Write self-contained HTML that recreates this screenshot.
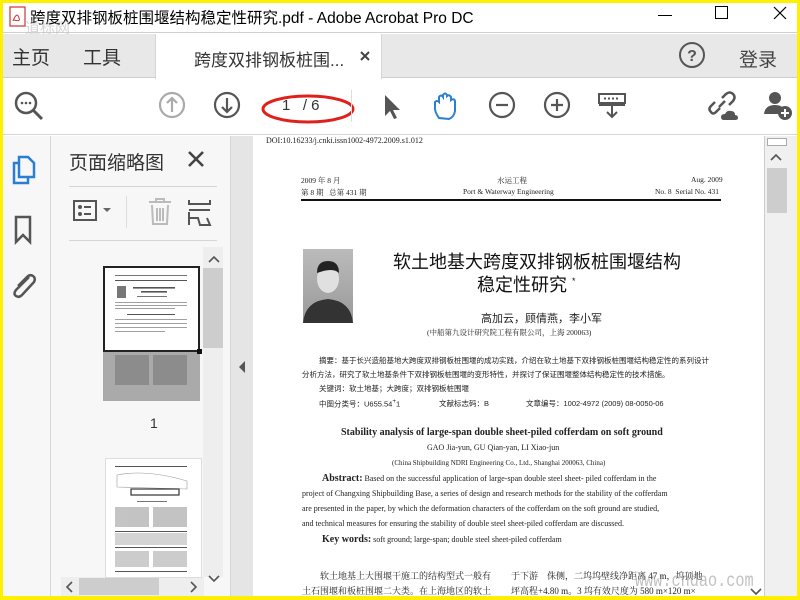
<!DOCTYPE html>
<html><head><meta charset="utf-8"><style>
*{margin:0;padding:0;box-sizing:border-box}
body{width:800px;height:600px;overflow:hidden;background:#ffef00;font-family:"Liberation Sans","Noto Sans CJK SC",sans-serif;position:relative}
.a{position:absolute}
.cj{font-family:"Liberation Serif","Noto Serif CJK SC","Noto Sans CJK SC",serif}
.sf{font-family:"Liberation Serif",serif}
.t{color:#222;white-space:nowrap}
</style></head><body>
<div class="a" style="left:3px;top:3px;width:794px;height:593px;background:#fff;overflow:hidden">
<div class="a" style="left:0;top:0;width:794px;height:30px;background:#fff;border-bottom:1px solid #d0d0d0"></div>
<svg class="a" style="left:4px;top:3px" width="22" height="22"><rect x="3" y="1" width="15" height="19" fill="#fff" stroke="#c33" stroke-width="1.2"/><path d="M6 15 Q10 5 12 12 Q14 16 7 14" stroke="#c33" fill="none"/></svg>
<div class="a t" style="left:27px;top:3px;font-size:15.5px;color:#000">跨度双排钢板桩围堰结构稳定性研究.pdf - Adobe Acrobat Pro DC</div>
<div class="a" style="left:22px;top:14px;font-size:15px;color:#bbb;opacity:.6">道标网</div>
<div class="a" style="left:655px;top:12px;width:14px;height:1px;background:#000"></div>
<div class="a" style="left:712px;top:3px;width:13px;height:13px;border:1px solid #000"></div>
<svg class="a" style="left:770px;top:3px" width="14" height="14"><path d="M1 1L13 13M13 1L1 13" stroke="#000" stroke-width="1.2"/></svg>
<div class="a" style="left:0;top:31px;width:794px;height:44px;background:#e8e8e8;border-bottom:1px solid #cfcfcf"></div>
<div class="a" style="left:152px;top:31px;width:227px;height:45px;background:#fff;border-left:1px solid #d5d5d5;border-right:1px solid #d5d5d5"></div>
<div class="a t" style="left:9px;top:40px;font-size:19px;color:#333">主页</div>
<div class="a t" style="left:80px;top:40px;font-size:19px;color:#333">工具</div>
<div class="a t" style="left:191px;top:43px;font-size:17px;color:#333">跨度双排钢板桩围...</div>
<svg class="a" style="left:357px;top:48px" width="10" height="10"><path d="M1 1L9 9M9 1L1 9" stroke="#444" stroke-width="2"/></svg>
<svg class="a" style="left:675px;top:38px" width="28" height="28"><circle cx="14" cy="14" r="12" fill="none" stroke="#555" stroke-width="2"/><text x="14" y="20" font-size="16" text-anchor="middle" fill="#555" font-family="Liberation Sans" font-weight="bold">?</text></svg>
<div class="a t" style="left:736px;top:42px;font-size:19px;color:#444">登录</div>
<div class="a" style="left:0;top:76px;width:794px;height:56px;background:#fff;border-bottom:1px solid #d5d5d5"></div>
<svg class="a" style="left:10px;top:87px" width="34" height="34"><circle cx="13" cy="13" r="10" fill="none" stroke="#555" stroke-width="2.5"/><path d="M20 20L29 29" stroke="#555" stroke-width="3"/><circle cx="9" cy="13" r="1.3" fill="#555"/><circle cx="13" cy="13" r="1.3" fill="#555"/><circle cx="17" cy="13" r="1.3" fill="#555"/></svg>
<svg class="a" style="left:155px;top:88px" width="28" height="28"><circle cx="14" cy="14" r="12" fill="none" stroke="#aaa" stroke-width="2.2"/><path d="M14 21V8M9 12L14 7L19 12" stroke="#aaa" stroke-width="2.2" fill="none"/></svg>
<svg class="a" style="left:210px;top:88px" width="28" height="28"><circle cx="14" cy="14" r="12" fill="none" stroke="#555" stroke-width="2.2"/><path d="M14 7V20M9 16L14 21L19 16" stroke="#555" stroke-width="2.2" fill="none"/></svg>
<div class="a t" style="left:279px;top:94px;font-size:15px;color:#333">1&nbsp;&nbsp;&nbsp;/ 6</div>
<svg class="a" style="left:255px;top:85px" width="100" height="40"><ellipse cx="50" cy="21" rx="45" ry="13" fill="none" stroke="#e0201a" stroke-width="3"/></svg>
<div class="a" style="left:348px;top:87px;width:1px;height:32px;background:#ddd"></div>
<svg class="a" style="left:378px;top:90px" width="22" height="28"><path d="M4 2L4 23L9 18L13 26L16 25L12 17L19 17Z" fill="#555"/></svg>
<svg class="a" style="left:428px;top:88px" width="30" height="30"><path d="M8 27Q3 20 4 15L4 11Q6 9 8 11L8 6Q10 3 12 6L12 4Q14 1 16 4L16 5Q18 3 20 6L20 9Q23 7 24 10L24 20Q23 26 18 28Z" fill="none" stroke="#2a7ed3" stroke-width="2"/></svg>
<svg class="a" style="left:485px;top:88px" width="28" height="28"><circle cx="14" cy="14" r="12" fill="none" stroke="#555" stroke-width="2.2"/><path d="M8 14H20" stroke="#555" stroke-width="2.2"/></svg>
<svg class="a" style="left:540px;top:88px" width="28" height="28"><circle cx="14" cy="14" r="12" fill="none" stroke="#555" stroke-width="2.2"/><path d="M8 14H20M14 8V20" stroke="#555" stroke-width="2.2"/></svg>
<svg class="a" style="left:594px;top:89px" width="30" height="28"><rect x="2" y="2" width="26" height="9" fill="none" stroke="#555" stroke-width="2"/><path d="M7 6.5H9M11 6.5H13M15 6.5H17M19 6.5H21M2 13H28" stroke="#555" stroke-width="2"/><path d="M15 14V25M10 20L15 25L20 20" stroke="#555" stroke-width="2" fill="none"/></svg>
<svg class="a" style="left:705px;top:87px" width="32" height="32"><path d="M14 8L18 4Q22 1 25 4Q28 7 25 11L21 15M12 18L8 22Q5 25 3 22Q0 19 3 16L7 12M11 17L17 11" stroke="#555" stroke-width="2.5" fill="none"/><path d="M16 30Q13 30 13 27Q13 24 17 24Q19 20 23 21Q27 21 27 25Q30 25 30 28Q30 30 27 30Z" fill="#555"/></svg>
<svg class="a" style="left:760px;top:87px" width="32" height="32"><circle cx="12" cy="8" r="6" fill="#555"/><path d="M1 24Q2 15 12 15Q18 15 20 18L18 24Z" fill="#555"/><circle cx="22" cy="23" r="7" fill="#555"/><path d="M22 19V27M18 23H26" stroke="#fff" stroke-width="2"/></svg>
<div class="a" style="left:0;top:133px;width:48px;height:460px;background:#f7f7f7;border-right:1px solid #d8d8d8"></div>
<svg class="a" style="left:8px;top:150px" width="28" height="34"><path d="M8 4H17L23 10V24H8Z" fill="none" stroke="#2a7ed3" stroke-width="2.5"/><path d="M8 10H3V30H17V24" fill="none" stroke="#2a7ed3" stroke-width="2.5"/></svg>
<svg class="a" style="left:10px;top:212px" width="22" height="30"><path d="M3 2H17V27L10 20L3 27Z" fill="none" stroke="#555" stroke-width="2.5"/></svg>
<svg class="a" style="left:6px;top:268px" width="30" height="30"><path d="M20 6L7 19Q4 23 7 25Q10 27 13 24L25 11Q27 7 24 5Q21 3 18 6L9 15" fill="none" stroke="#555" stroke-width="2.5"/></svg>
<div class="a" style="left:48px;top:133px;width:179px;height:460px;background:#f7f7f7"></div>
<div class="a t" style="left:66px;top:145px;font-size:19px;color:#333">页面缩略图</div>
<svg class="a" style="left:184px;top:147px" width="18" height="18"><path d="M2 2L16 16M16 2L2 16" stroke="#444" stroke-width="2.6"/></svg>
<div class="a" style="left:66px;top:183px;width:148px;height:1px;background:#d5d5d5"></div>
<svg class="a" style="left:69px;top:196px" width="28" height="24"><rect x="2" y="2" width="22" height="19" fill="none" stroke="#555" stroke-width="2"/><circle cx="8" cy="8" r="2" fill="#555"/><circle cx="8" cy="15" r="2" fill="#555"/><path d="M12 8H19M12 15H19" stroke="#555" stroke-width="2"/></svg>
<svg class="a" style="left:100px;top:205px" width="10" height="6"><path d="M0 0H8L4 4Z" fill="#666"/></svg>
<div class="a" style="left:123px;top:193px;width:1px;height:32px;background:#ddd"></div>
<svg class="a" style="left:143px;top:194px" width="28" height="30"><path d="M3 5H25M10 5V2H18V5M6 8L7 27H21L22 8M11 11V24M14 11V24M17 11V24" stroke="#bbb" stroke-width="2" fill="none"/></svg>
<svg class="a" style="left:184px;top:195px" width="26" height="30"><path d="M2 2V6H23V2M2 12H23M2 14V27M2 20H11L13 27H23L20 20" stroke="#555" stroke-width="2" fill="none"/></svg>
<div class="a" style="left:66px;top:237px;width:148px;height:1px;background:#d5d5d5"></div>
<div class="a" style="left:200px;top:244px;width:20px;height:330px;background:#eee"></div>
<svg class="a" style="left:205px;top:252px" width="12" height="8"><path d="M1 7L6 2L11 7" stroke="#555" stroke-width="1.6" fill="none"/></svg>
<div class="a" style="left:200px;top:265px;width:20px;height:80px;background:#cdcdcd"></div>
<svg class="a" style="left:205px;top:572px" width="12" height="8"><path d="M1 1L6 6L11 1" stroke="#555" stroke-width="1.6" fill="none"/></svg>
<div class="a" style="left:58px;top:574px;width:143px;height:19px;background:#eee"></div>
<div class="a" style="left:76px;top:575px;width:80px;height:17px;background:#cdcdcd"></div>
<svg class="a" style="left:62px;top:577px" width="10" height="14"><path d="M7 2L2 7L7 12" stroke="#555" stroke-width="1.6" fill="none"/></svg>
<svg class="a" style="left:186px;top:577px" width="10" height="14"><path d="M2 2L7 7L2 12" stroke="#555" stroke-width="1.6" fill="none"/></svg>
<div class="a" style="left:100px;top:263px;width:97px;height:135px;background:#aaa"></div>
<div class="a" style="left:100px;top:263px;width:97px;height:86px;background:#fff;border:2px solid #222"></div>
<div class="a" style="left:194px;top:346px;width:5px;height:5px;background:#111"></div>
<svg class="a" style="left:104px;top:268px" width="88" height="128" viewBox="0 0 88 128"><g fill="#555"><rect x="8" y="4" width="72" height=".8"/><rect x="8" y="9" width="72" height="1"/><rect x="10" y="15" width="9" height="12" fill="#777"/><rect x="26" y="16" width="42" height="1.6"/><rect x="34" y="20" width="26" height="1.6"/><rect x="30" y="25" width="30" height=".8"/><rect x="8" y="31" width="72" height=".8" opacity=".7"/><rect x="8" y="34" width="72" height=".8" opacity=".7"/><rect x="8" y="37" width="60" height=".8" opacity=".7"/><rect x="20" y="43" width="48" height="1"/><rect x="8" y="48" width="72" height=".8" opacity=".7"/><rect x="8" y="52" width="72" height=".8" opacity=".7"/><rect x="8" y="56" width="72" height=".8" opacity=".7"/><rect x="8" y="60" width="50" height=".8" opacity=".7"/><rect x="8" y="84" width="34" height="30" opacity=".35"/><rect x="46" y="84" width="34" height="30" opacity=".35"/></g></svg>
<div class="a t" style="left:147px;top:412px;font-size:14px;color:#333">1</div>
<div class="a" style="left:102px;top:455px;width:97px;height:120px;background:#fff;border:1px solid #ddd"></div>
<svg class="a" style="left:104px;top:460px" width="90" height="115"><g fill="#555"><rect x="8" y="3" width="72" height="1"/><path d="M10 12Q40 6 80 18L80 26L10 24Z" fill="none" stroke="#999" stroke-width=".6"/><rect x="24" y="26" width="48" height="6" fill="none" stroke="#333" stroke-width="1.2"/><rect x="30" y="38" width="30" height=".8"/><g opacity=".35"><rect x="8" y="44" width="34" height="20"/><rect x="46" y="44" width="34" height="20"/></g><rect x="8" y="68" width="72" height="1"/><rect x="8" y="70" width="72" height="12" opacity=".25"/><rect x="8" y="84" width="72" height="1"/><rect x="8" y="88" width="34" height="16" opacity=".3"/><rect x="46" y="88" width="34" height="16" opacity=".3"/><rect x="8" y="108" width="72" height="1"/></g></svg>
<div class="a" style="left:227px;top:133px;width:23px;height:460px;background:#e5e5e5;border-left:1px solid #d5d5d5"></div>
<svg class="a" style="left:235px;top:357px" width="8" height="14"><path d="M7 1L1 7L7 13Z" fill="#555"/></svg>
<div class="a" style="left:250px;top:133px;width:512px;height:460px;background:#fff;border-right:1px solid #ccc"></div>
<div class="a" style="left:762px;top:133px;width:32px;height:460px;background:#f0f0f0"></div>
<div class="a" style="left:764px;top:135px;width:20px;height:8px;background:#fff;border:1px solid #aaa"></div>
<svg class="a" style="left:767px;top:150px" width="12" height="8"><path d="M1 7L6 2L11 7" stroke="#555" stroke-width="1.6" fill="none"/></svg>
<div class="a" style="left:764px;top:165px;width:20px;height:45px;background:#cdcdcd"></div>
<svg class="a" style="left:747px;top:585px" width="12" height="8"><path d="M1 1L6 6L11 1" stroke="#555" stroke-width="1.6" fill="none"/></svg>

<div class="a t sf" style="left:263px;top:133px;font-size:8px">DOI:10.16233/j.cnki.issn1002-4972.2009.s1.012</div>
<div class="a t cj" style="left:298px;top:172px;font-size:7.5px">2009 年 8 月</div>
<div class="a t cj" style="left:298px;top:184px;font-size:7.5px">第 8 期&nbsp;&nbsp;&nbsp;总第 431 期</div>
<div class="a t cj" style="left:494px;top:172px;font-size:7.5px">水运工程</div>
<div class="a t sf" style="left:460px;top:184px;font-size:7.5px">Port &amp; Waterway Engineering</div>
<div class="a t sf" style="left:688px;top:172px;font-size:7.5px">Aug. 2009</div>
<div class="a t sf" style="left:652px;top:184px;font-size:7.5px">No. 8&nbsp;&nbsp;Serial No. 431</div>
<div class="a" style="left:298px;top:196px;width:420px;height:2px;background:#111"></div>
<div class="a" style="left:300px;top:246px;width:50px;height:74px;background:linear-gradient(#bbb,#999)"></div>
<svg class="a" style="left:300px;top:246px" width="50" height="74"><ellipse cx="25" cy="30" rx="11" ry="14" fill="#e0e0e0"/><path d="M14 24Q14 12 25 12Q36 12 36 24Q30 18 14 24" fill="#222"/><path d="M0 74Q2 52 25 50Q48 52 50 74Z" fill="#333"/></svg>
<div class="a t" style="left:390px;top:245px;font-size:18px;color:#111">软土地基大跨度双排钢板桩围堰结构</div>
<div class="a t" style="left:474px;top:268px;font-size:18px;color:#111">稳定性研究 <sup style="font-size:9px">*</sup></div>
<div class="a t" style="left:478px;top:307px;font-size:11px">高加云，顾倩燕，李小军</div>
<div class="a t cj" style="left:424px;top:324px;font-size:7.5px">(中船第九设计研究院工程有限公司，上海 200063)</div>
<div class="a t" style="left:316px;top:352px;font-size:7.5px">摘要：基于长兴造船基地大跨度双排钢板桩围堰的成功实践，介绍在软土地基下双排钢板桩围堰结构稳定性的系列设计</div>
<div class="a t" style="left:299px;top:366px;font-size:7.5px">分析方法，研究了软土地基条件下双排钢板桩围堰的变形特性，并探讨了保证围堰整体结构稳定性的技术措施。</div>
<div class="a t" style="left:316px;top:380px;font-size:7.5px">关键词：软土地基；大跨度；双排钢板桩围堰</div>
<div class="a t" style="left:316px;top:395px;font-size:7.5px">中图分类号：U655.54<sup>+</sup>1</div>
<div class="a t" style="left:436px;top:395px;font-size:7.5px">文献标志码：B</div>
<div class="a t" style="left:523px;top:395px;font-size:7.5px">文章编号：1002-4972 (2009) 08-0050-06</div>
<div class="a t sf" style="left:338px;top:424px;font-size:10px;font-weight:bold">Stability analysis of large-span double sheet-piled cofferdam on soft ground</div>
<div class="a t sf" style="left:424px;top:440px;font-size:8px">GAO Jia-yun, GU Qian-yan, LI Xiao-jun</div>
<div class="a t sf" style="left:389px;top:456px;font-size:7px">(China Shipbuilding NDRI Engineering Co., Ltd., Shanghai 200063, China)</div>
<div class="a t sf" style="left:319px;top:470px;font-size:8px"><b style="font-size:10px">Abstract:</b> Based on the successful application of large-span double steel sheet- piled cofferdam in the</div>
<div class="a t sf" style="left:299px;top:486px;font-size:8px">project of Changxing Shipbuilding Base, a series of design and research methods for the stability of the cofferdam</div>
<div class="a t sf" style="left:299px;top:501px;font-size:8px">are presented in the paper, by which the deformation characters of the cofferdam on the soft ground are studied,</div>
<div class="a t sf" style="left:299px;top:516px;font-size:8px">and technical measures for ensuring the stability of double steel sheet-piled cofferdam are discussed.</div>
<div class="a t sf" style="left:319px;top:531px;font-size:8px"><b style="font-size:10px">Key words:</b> soft ground; large-span; double steel sheet-piled cofferdam</div>
<div class="a t cj" style="left:317px;top:566px;font-size:9px">软土地基上大围堰干施工的结构型式一般有</div>
<div class="a t cj" style="left:299px;top:581px;font-size:9px">土石围堰和板桩围堰二大类。在上海地区的软土</div>
<div class="a t cj" style="left:508px;top:566px;font-size:9px">于下游　侏侧，二坞坞壁线净距离 47 m，坞顶地</div>
<div class="a t cj" style="left:508px;top:581px;font-size:9px">坪高程+4.80 m。3 坞有效尺度为 580 m×120 m×</div>
<div class="a t" style="left:632px;top:567px;font-size:19px;color:#999;opacity:.6;font-family:'Liberation Mono',monospace;transform:scaleX(.8);transform-origin:left">www.chdao.com</div>
</div>
</body></html>
